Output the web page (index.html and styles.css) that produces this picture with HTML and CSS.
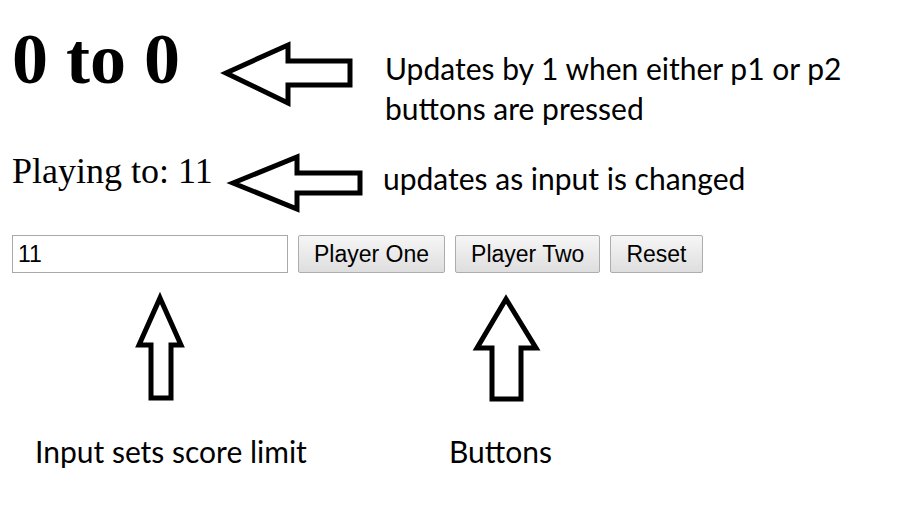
FILE: index.html
```html
<!DOCTYPE html>
<html lang="en">
<head>
<meta charset="utf-8">
<title>Score Keeper</title>
<link rel="stylesheet" href="styles.css">
</head>
<body>
<main class="app">
  <h1 class="score">0 to 0</h1>
  <p class="target">Playing to: 11</p>
  <div class="controls">
    <input class="limit" type="number" value="11">
    <button class="btn">Player One</button>
    <button class="btn">Player Two</button>
    <button class="btn">Reset</button>
  </div>
</main>

<div class="notes">
  <svg class="arrows" width="924" height="515" viewBox="0 0 924 515" aria-hidden="true">
    <polygon points="226,73 288,45 288,61 350,61 350,85 288,85 288,103"/>
    <polygon points="233,183 297,157 297,173 360,173 360,193 297,193 297,209"/>
    <polygon points="160,298 181,345 171,345 171,398 151,398 151,345 139,345"/>
    <polygon points="506,299 536,348 521,348 521,399 492,399 492,348 477,348"/>
  </svg>
  <div class="note note-score">Updates by 1 when either p1 or p2<br>buttons are pressed</div>
  <div class="note note-target">updates as input is changed</div>
  <div class="note note-input">Input sets score limit</div>
  <div class="note note-buttons">Buttons</div>
</div>
</body>
</html>
```
FILE: styles.css
```css
html, body {
  margin: 0;
  padding: 0;
  background: #ffffff;
  width: 924px;
  height: 515px;
  overflow: hidden;
}

body {
  position: relative;
  color: #000;
  font-family: "Liberation Serif", "Times New Roman", serif;
}

.app {
  padding: 23px 0 0 12px;
}

.score {
  margin: 0;
  font-size: 72px;
  line-height: 72px;
  font-weight: bold;
}

.target {
  margin: 58px 0 0;
  font-size: 36px;
  line-height: 36px;
}

.controls {
  margin-top: 46px;
  display: flex;
  align-items: center;
  gap: 10px;
}

.limit {
  box-sizing: border-box;
  width: 276px;
  height: 38px;
  margin: 0;
  padding: 0 5px;
  border: 1px solid #a9a9a9;
  border-radius: 0;
  font-family: "Liberation Sans", Arial, sans-serif;
  font-size: 23px;
  color: #000;
  background: #fff;
  -moz-appearance: textfield;
}

.limit::-webkit-inner-spin-button,
.limit::-webkit-outer-spin-button {
  -webkit-appearance: none;
  margin: 0;
}

.btn {
  box-sizing: border-box;
  height: 38px;
  margin: 0;
  padding: 0 15px;
  border: 1px solid #adadad;
  border-radius: 2px;
  background: linear-gradient(#f6f6f6, #dedede);
  font-family: "Liberation Sans", Arial, sans-serif;
  font-size: 23px;
  color: #000;
}

.notes {
  position: absolute;
  left: 0;
  top: 0;
  width: 924px;
  height: 515px;
  pointer-events: none;
}

.arrows {
  position: absolute;
  left: 0;
  top: 0;
}

.arrows polygon {
  fill: #fff;
  stroke: #000;
  stroke-width: 5;
  stroke-linejoin: miter;
}

.note {
  position: absolute;
  font-family: Lato, "Open Sans", sans-serif;
  font-size: 30px;
  line-height: 40px;
  white-space: nowrap;
  color: #000;
}

.note-score {
  left: 385px;
  top: 48px;
}

.note-target {
  left: 383px;
  top: 158px;
}

.note-input {
  left: 35px;
  top: 431px;
}

.note-buttons {
  left: 449px;
  top: 431px;
}
```
